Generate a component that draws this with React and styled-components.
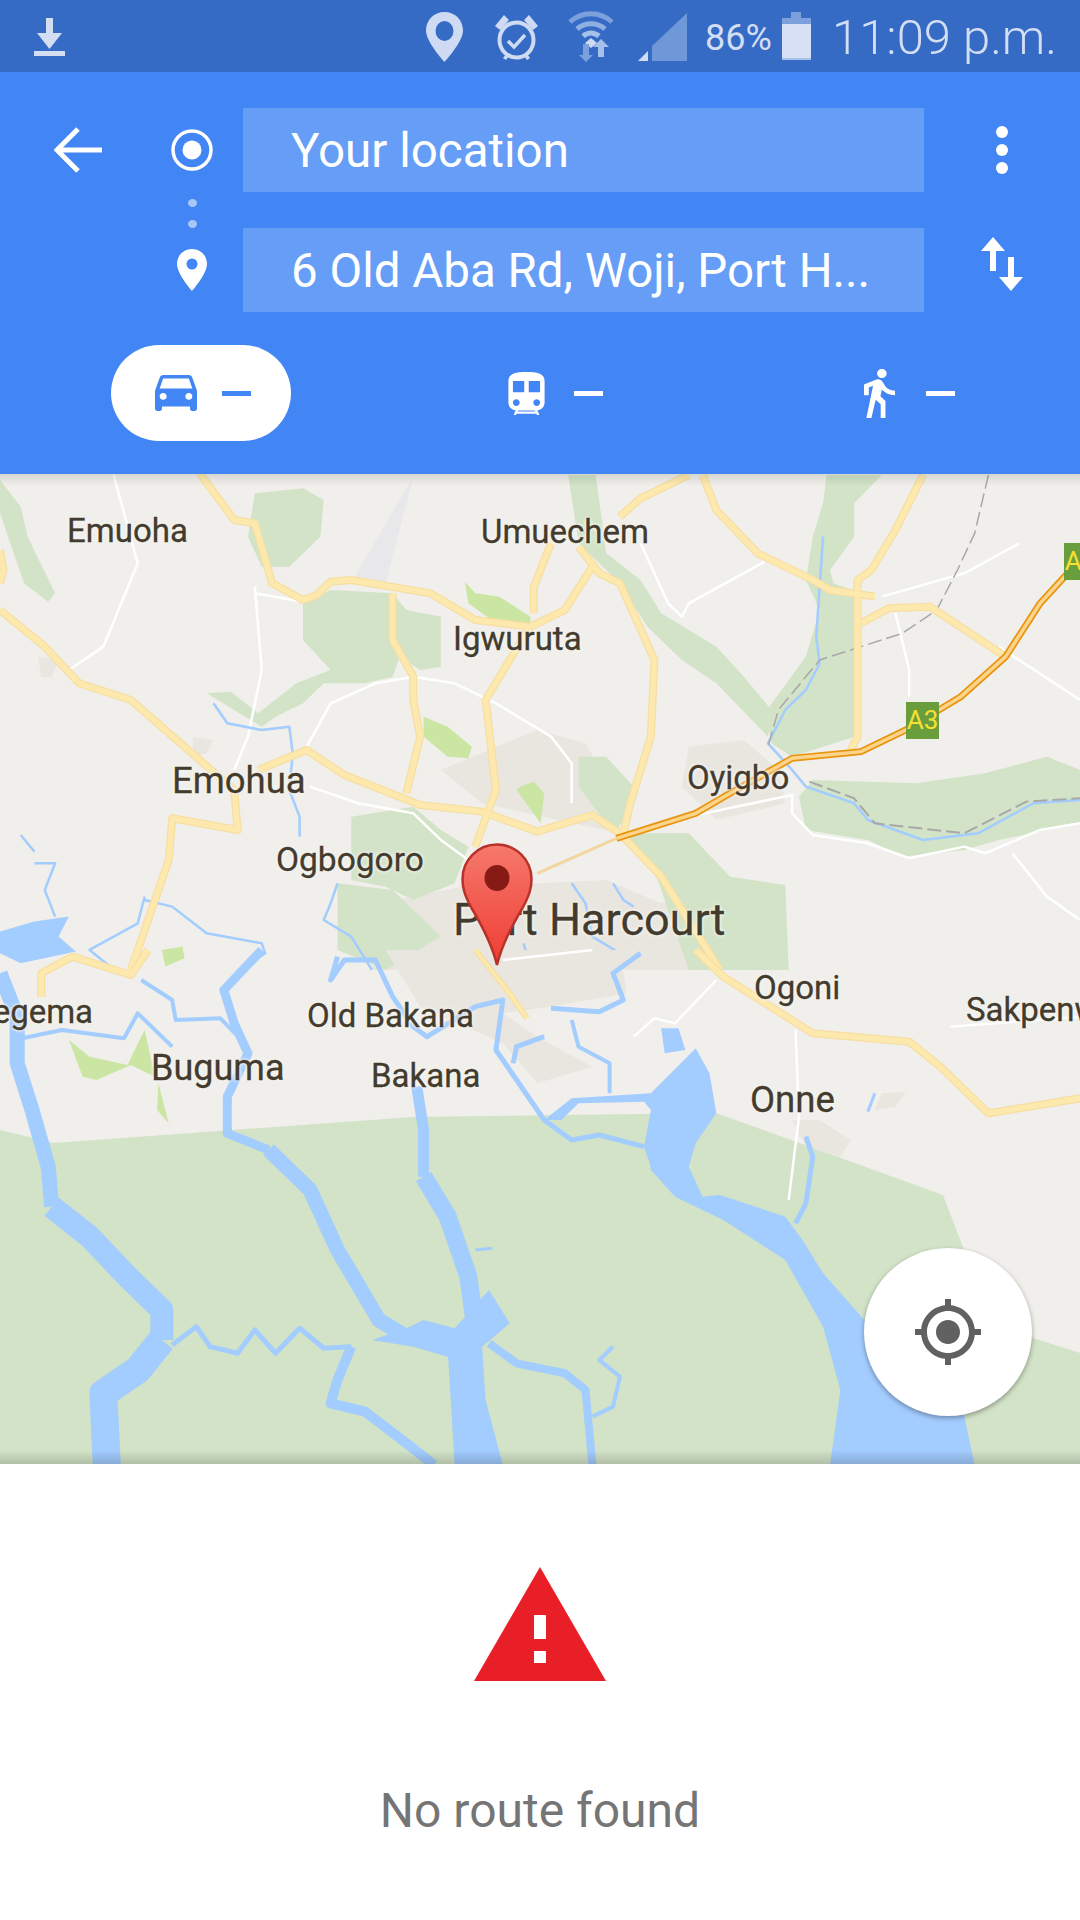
import React from "react";
import styled, { createGlobalStyle } from "styled-components";

const Global = createGlobalStyle`
  html, body { margin: 0; padding: 0; background: #fff; }
  body { font-family: Roboto, "Liberation Sans", sans-serif; }
  * { box-sizing: border-box; }
`;

const Page = styled.div`
  width: 1080px;
  height: 1920px;
  display: flex;
  flex-direction: column;
  overflow: hidden;
  background: #fff;
`;

// status bar
const StatusBar = styled.div`
  height: 72px;
  background: #366bc5;
  display: flex;
  align-items: center;
  padding-left: 34px;
  color: #d3def3;
`;
const StatusIcon = styled.svg`
  display: block;
  flex: none;
  margin-left: ${(p) => p.$ml || 0}px;
  margin-top: ${(p) => p.$mt || 0}px;
`;
const Percent = styled.span`
  font-size: 36px;
  line-height: 72px;
  padding-top: 4px;
  margin-left: 18px;
  width: 66px;
  white-space: nowrap;
`;
const Clock = styled.span`
  font-size: 49px;
  font-weight: 300;
  line-height: 72px;
  padding-top: 4px;
  margin-left: 21px;
  white-space: nowrap;
`;

// directions header
const Header = styled.header`
  height: 402px;
  background: #4285f4;
  padding-top: 36px;
`;
const RouteGrid = styled.div`
  display: grid;
  grid-template-columns: 243px 681px 156px;
  grid-template-rows: 84px 36px 84px;
`;
const LeftCell = styled.div`
  display: flex;
  align-items: center;
  padding-left: ${(p) => p.$pl || 0}px;
`;
const Field = styled.div`
  background: #669df6;
  color: #fff;
  font-size: 47.500px;
  line-height: 86px;
  height: 84px;
  padding-left: 48px;
  white-space: nowrap;
  overflow: hidden;
`;
const SideCell = styled.div`
  display: flex;
  justify-content: center;
  padding-top: ${(p) => p.$pt || 0}px;
`;
const Connector = styled.div`
  grid-column: 1;
  display: flex;
  flex-direction: column;
  align-items: center;
  gap: 13px;
  width: 243px;
  padding: 7px 0 0 141px;
`;
const ConnectorDot = styled.span`
  width: 9px;
  height: 9px;
  border-radius: 50%;
  background: #a9c8fa;
`;
const Modes = styled.div`
  display: grid;
  grid-template-columns: 353px 356px 180px;
  padding-left: 111px;
  margin-top: 33px;
`;
const Mode = styled.div`
  height: 96px;
  border-radius: 48px;
  background: ${(p) => (p.$active ? "#fff" : "transparent")};
  color: ${(p) => (p.$active ? "#4285f4" : "#fff")};
  display: flex;
  align-items: center;
  padding-left: 44px;
  width: 180px;
`;
const Dash = styled.span`
  width: 29px;
  height: 5px;
  background: currentColor;
  margin-left: ${(p) => p.$ml}px;
`;

// map
const MapArea = styled.div`
  position: relative;
  height: 990px;
  background: #f0efeb;
  overflow: hidden;
`;
const MapSvg = styled.svg`
  display: block;
`;
const Line = styled.polyline`
  fill: none;
  stroke: ${(p) => p.$c};
  stroke-width: ${(p) => p.$w};
  stroke-linejoin: ${(p) => p.$join || "round"};
  stroke-dasharray: ${(p) => p.$dash || "none"};
  vector-effect: non-scaling-stroke;
`;
const MapLabel = styled.span`
  position: absolute;
  left: ${(p) => p.$x}px;
  top: ${(p) => p.$y - 474}px;
  transform: translateY(-50%);
  font-size: ${(p) => p.$size || 33}px;
  line-height: 1;
  color: #433b2d;
  -webkit-text-stroke: 0.3px #433b2d;
  white-space: nowrap;
  text-shadow: 0 0 3px #f5f4f0, 0 0 3px #f5f4f0, 0 0 4px #f5f4f0;
`;
const Shield = styled.span`
  position: absolute;
  left: ${(p) => p.$x}px;
  top: ${(p) => p.$y - 474}px;
  width: 33px;
  height: 37px;
  background: #6a9e3c;
  color: #f6e032;
  font-size: 26px;
  line-height: 37px;
  text-align: center;
  overflow: hidden;
  white-space: nowrap;
`;
const Pin = styled.svg`
  position: absolute;
  left: 461px;
  top: 369px;
`;
const EdgeShade = styled.div`
  position: absolute;
  left: 0;
  right: 0;
  height: ${(p) => p.$h}px;
  ${(p) => (p.$top ? "top: 0;" : "bottom: 0;")}
  background: linear-gradient(
    ${(p) => (p.$top ? "to bottom" : "to top")},
    rgba(0, 0, 0, ${(p) => p.$a}),
    rgba(0, 0, 0, 0)
  );
`;
const LocateButton = styled.div`
  position: absolute;
  left: 864px;
  top: 774px;
  width: 168px;
  height: 168px;
  border-radius: 50%;
  background: #fff;
  box-shadow: 0 2px 5px rgba(0, 0, 0, 0.35);
  display: flex;
  align-items: center;
  justify-content: center;
`;

// bottom sheet
const Sheet = styled.section`
  flex: 1;
  display: flex;
  flex-direction: column;
  align-items: center;
  padding-top: 103px;
`;
const NoRoute = styled.p`
  margin: 102px 0 0;
  font-size: 48px;
  line-height: 56px;
  color: #757575;
`;

// map shapes, coordinates as read from the two zoomed crops
const greens = [
  "0,30 30,110 40,200 80,370 70,395 35,340 0,130",
  "370,70 440,55 470,90 465,200 420,290 380,290 360,200",
  "440,400 480,360 570,370 590,420 640,440 640,590 610,600 580,560 570,620 530,640 470,640 440,700 400,740 380,770 300,670 335,665 375,730 430,640 480,600 440,510",
  "825,15 865,15 880,250 930,330 960,430 1040,530 1080,620 1120,720 1115,800 1040,640 990,570 940,470 900,340 840,220",
  "1200,15 1280,15 1240,100 1240,200 1205,300 1210,340 1250,370 1240,800 1150,860 1120,820 1110,730 1170,560 1190,420 1170,330 1180,200 1195,100",
  "1160,980 1180,930 1330,940 1430,910 1520,860 1568,900 1568,1060 1450,1110 1400,1140 1310,1160 1260,1110 1170,1080",
  "510,1040 600,1010 640,1080 680,1130 660,1240 600,1290 560,1250 510,1230",
  "840,860 880,860 920,950 910,1040 890,1090 1000,1090 1060,1220 1140,1245 1145,1500 1000,1500 950,1200 900,1110 880,1060 840,950",
  "490,1240 570,1260 640,1400 560,1500 490,1440",
];
const limes = [
  "675,335 690,370 725,380 770,440 770,470 720,460 680,400",
  "615,740 650,770 685,830 680,865 650,860 615,800",
  "755,950 775,935 790,970 785,1060 750,960",
  "235,1440 265,1430 268,1465 240,1490",
];
const urban = [
  "1000,830 1080,810 1130,900 1140,1000 1040,1050 990,950",
  "640,900 780,780 850,820 900,1000 900,1090 700,1000",
  "550,1300 670,1250 780,1240 880,1230 960,1300 1050,1260 1080,1500 540,1500",
  "280,800 310,810 300,850 280,860",
  "55,560 85,570 75,620 60,620",
];
const whites = [
  "165,15 200,280 150,530 100,600",
  "370,370 440,395",
  "370,350 380,600 360,800 340,900",
  "1110,275 1000,400 990,440 970,400 930,220",
  "1280,380 1400,310 1480,220",
  "1300,430 1320,600 1320,680",
  "1450,530 1568,690",
  "440,850 480,700 545,640 600,620 660,640 720,700 800,800 830,880 830,1000",
  "450,950 520,1000 600,1030 640,1110 680,1170",
  "1000,1040 1150,975 1150,1030 1180,1095 1260,1120 1320,1165 1400,1130 1430,1150 1510,1080 1568,1060",
  "1470,1150 1520,1280 1568,1350",
];
const thinWater = [
  "310,700 330,760 380,780 420,770 425,850 420,960 435,1040 435,1100",
  "210,1280 200,1360 130,1440 160,1490",
  "210,1290 250,1310 300,1390 380,1420 385,1450 350,1500",
  "30,1095 50,1145",
  "50,1180 80,1180 65,1260 80,1340",
  "490,1240 480,1300 470,1350 510,1400 540,1500",
  "1195,200 1185,500 1190,580 1170,660 1140,720 1115,820 1150,900 1170,950 1240,1000 1260,1050 1340,1110 1420,1090 1500,1000 1568,990",
  "890,1240 905,1290 920,1310",
  "830,1240 850,1300 860,1400 900,1450",
  "760,1420 770,1490",
];
const roads = [
  "290,10 340,150 370,160 395,340 440,390 460,375 480,335 510,330 625,370 690,450 770,470",
  "570,370 570,510 600,620 600,690 610,800 590,970",
  "0,420 65,530 115,640 190,690 290,870 340,960 345,1080 250,1045 245,1170 190,1500",
  "375,900 445,840 500,915 610,1005 700,1025 780,1085 860,1035 900,1090 960,1220 1045,1500",
  "800,220 775,350 775,430",
  "860,290 820,420 770,470 740,570 705,690 720,960 690,1130",
  "840,230 870,310 900,340 950,570 945,800 915,1000 905,1090",
  "1000,15 930,85 900,140",
  "1020,15 1040,120 1100,250 1180,330 1205,360 1270,380",
  "1340,15 1300,180 1265,300 1245,330 1245,800 1235,840",
  "1250,460 1290,415 1350,410 1460,560",
  "0,240 5,300 0,340",
];
const highway = "895,1105 1010,1030 1060,970 1150,865 1250,845 1315,780 1395,680 1460,560 1510,400 1550,310";

const southWaterShapes = [
  "945,430 1010,295 1030,370 1040,490 1010,580 1000,650 945,650 935,590 945,480 935,455 840,460 815,510 790,510 830,445",
  "940,590 1000,650 1020,740 1045,735 1140,800 1165,870 1195,970 1255,1110 1400,1400 1415,1545 1205,1545 1220,1320 1195,1130 1140,930 1050,810 980,740 945,660",
  "540,1170 590,1135 615,1110 660,1135 710,1020 740,1120 700,1190 650,1220 600,1190",
  "650,1200 700,1190 705,1350 730,1545 660,1545",
  "960,235 985,235 995,300 965,310",
];
const rivers = [
  { w: 15, p: "0,70 25,200 25,340 45,470 70,650 75,770" },
  { w: 23, p: "75,770 130,860 185,980 235,1080 235,1170" },
  { w: 28, p: "235,1170 200,1260 150,1330 155,1545" },
  { w: 9, p: "380,0 325,120 340,220 360,310 330,440 330,550 390,600" },
  { w: 15, p: "390,600 450,720 490,900 550,1110 590,1160 680,1210" },
  { w: 5, p: "250,1185 285,1130 305,1190 345,1210 370,1140 400,1210 435,1135 470,1195 510,1190" },
  { w: 11, p: "605,410 615,540 615,680" },
  { w: 18, p: "615,680 650,800 680,980 690,1130" },
  { w: 10, p: "510,1190 490,1290 480,1360 530,1385 590,1480 630,1545" },
  { w: 8, p: "710,1180 750,1240 820,1270 850,1320 860,1545" },
  { w: 4, p: "890,1190 870,1230 900,1280 890,1370 860,1400" },
  { w: 3, p: "690,900 715,895" },
  { w: 5, p: "1170,560 1180,620 1170,760 1155,820" },
  { w: 4, p: "205,90 250,150 255,210 320,205 360,290" },
  { w: 4, p: "20,270 90,240 180,265 200,190 220,230 250,290" },
  { w: 5, p: "490,20 480,90 500,30 545,30 570,140 600,230 620,260 690,170 730,150 720,300 790,510 830,570 870,555 935,590" },
  { w: 5, p: "790,260 750,290 745,340" },
  { w: 5, p: "800,175 870,185 905,150 890,70 930,10" },
  { w: 4, p: "830,210 840,290 885,340 885,430" },
  { w: 3, p: "1270,430 1260,485" },
];
const z3Greens = [
  "100,270 130,320 185,345 210,240 225,380 190,345 140,390 120,380",
  "230,400 245,520 228,480",
];
const z3Urban = [
  "560,0 900,0 910,130 800,170 730,190 780,260 860,350 780,400 730,280 610,170",
  "1150,510 1190,510 1235,570 1220,620 1170,590",
  "1280,430 1315,425 1300,470 1270,480",
];
const z3Whites = [
  "1155,240 1160,500 1145,750",
  "1040,90 980,220 950,205 920,260",
  "730,30 860,0",
  "1380,230 1568,200",
];
const z3Roads = [
  { w: 8, p: "1010,0 1050,80 1180,250 1320,275 1365,350 1435,490 1568,445" },
  { w: 6, p: "690,0 740,130 765,205" },
  { w: 8, p: "60,140 60,70 105,20 190,75 215,0" },
];
const southGreen = "0,1130 54,1143 413,1117 716,1113 943,1195 964,1250 1033,1338 1080,1353 1080,1464 0,1464";

const labels = [
  ["Emuoha", 67, 530],
  ["Umuechem", 481, 531],
  ["Igwuruta", 453, 638],
  ["Emohua", 172, 781, 36.500],
  ["Oyigbo", 687, 777],
  ["Ogbogoro", 276, 860, 33.500],
  ["Port Harcourt", 453, 919, 45],
  ["Ogoni", 754, 987],
  ["Sakpenwa", 966, 1009],
  ["Degema", -29, 1011],
  ["Old Bakana", 307, 1015],
  ["Buguma", 151, 1068, 36],
  ["Bakana", 371, 1075],
  ["Onne", 750, 1100, 36.500],
];

const MapDrawing = () => (
  <MapSvg width="1080" height="990" viewBox="0 474 1080 990">
    <polygon points={southGreen} fill="#d2e3c7" />
    {/* north part of the map, crop 2 */}
    <g transform="translate(0 470) scale(0.6888 0.3333)">
      {urban.map((p) => <polygon key={p} points={p} fill="#e9e6df" />)}
      {greens.map((p) => <polygon key={p} points={p} fill="#d2e3c7" />)}
      {limes.map((p) => <polygon key={p} points={p} fill="#cbe5a3" />)}
      {whites.map((p) => <Line key={p} points={p} $c="#fff" $w={2.500} />)}
      {thinWater.map((p) => <Line key={p} points={p} $c="#a3ccff" $w={2.500} />)}
      <polygon points="0,1385 50,1355 100,1340 85,1400 110,1445 30,1480 0,1450" fill="#a3ccff" />
      <polygon points="600,20 560,340 515,320" fill="#e8e8ea" />
      <Line points="1435,15 1415,190 1390,300 1360,420 1310,490 1190,570 1130,720 1115,830" $c="#a8a8a8" $w={1.500} $dash="14 5" />
      <Line points="1175,935 1240,985 1270,1060 1400,1090 1490,995 1568,985" $c="#a8a8a8" $w={2} $dash="14 5" />
      {roads.map((p) => <Line key={p} points={p} $c="#f7dea2" $w={8} />)}
      {roads.map((p) => <Line key={p + "i"} points={p} $c="#fde9ae" $w={5.500} />)}
      <Line points="780,1210 895,1105" $c="#f1d79e" $w={3} />
      <Line points={highway} $c="#e8950f" $w={7} $join="miter" />
      <Line points={highway} $c="#fdd48b" $w={3.500} $join="miter" />
    </g>
    {/* south part of the map, crop 3 */}
    <g transform="translate(0 950) scale(0.6888 0.3333)">
      {z3Urban.map((p) => <polygon key={p} points={p} fill="#e9e6df" />)}
      {z3Greens.map((p) => <polygon key={p} points={p} fill="#cbe5a3" />)}
      {z3Whites.map((p) => <Line key={p} points={p} $c="#fff" $w={2.500} />)}
      {southWaterShapes.map((p) => <polygon key={p} points={p} fill="#a3ccff" />)}
      {rivers.map((r) => <Line key={r.p} points={r.p} $c="#a3ccff" $w={r.w} />)}
      {z3Roads.map((r) => <Line key={r.p} points={r.p} $c="#f7dea2" $w={r.w} />)}
      {z3Roads.map((r) => <Line key={r.p + "i"} points={r.p} $c="#fde9ae" $w={r.w - 2.500} />)}
    </g>
  </MapSvg>
);

const App = () => (
  <Page>
    <Global />
    <StatusBar>
      <StatusIcon width="31" height="38" viewBox="0 0 31 38" $mt="2">
        <path d="M12 0h7v15h9L15.500 31 3 15h9z" fill="#d3def3" />
        <rect y="33" width="31" height="5" fill="#d3def3" />
      </StatusIcon>
      <StatusIcon width="37" height="50" viewBox="0 0 37 50" $ml="361" $mt="2">
        <path
          fillRule="evenodd"
          fill="#cfdbf2"
          d="M18.500 0C8 0 0 8 0 18.500 0 30 18.500 50 18.500 50S37 30 37 18.500C37 8 29 0 18.500 0zm0 9a9 10 0 1 1 0 20 9 10 0 0 1 0-20z"
        />
      </StatusIcon>
      <StatusIcon width="45" height="47" viewBox="0 0 45 47" $ml="31" $mt="2">
        <ellipse cx="22.500" cy="26" rx="17" ry="17.500" fill="none" stroke="#cfdbf2" strokeWidth="4" />
        <path d="M14 27l6 6 11-12" fill="none" stroke="#cfdbf2" strokeWidth="3.500" />
        <path d="M1 12L10 1l5 5-9 10zM44 12L35 1l-5 5 9 10zM9 44l3-4 3 2-3 4zM36 44l-3-4-3 2 3 4z" fill="#cfdbf2" />
      </StatusIcon>
      <StatusIcon width="48" height="52" viewBox="0 0 48 52" $ml="28">
        <path d="M3 12C15 1 33 1 45 12" fill="none" stroke="#7ba0dc" strokeWidth="5" />
        <path d="M10 19c8-7 20-7 28 0" fill="none" stroke="#8eafe2" strokeWidth="5" />
        <path d="M16 26c5-4 11-4 16 0" fill="none" stroke="#a5c0e9" strokeWidth="5" />
        <path d="M24 28l6 5-6 5-6-5z" fill="#cfdbf2" />
        <path d="M16 34v11h4l-7 7-7-7h4V34z" fill="#7ba0dc" transform="translate(6 0)" />
        <path d="M33 36h6v11h-6zM36 29l8 8H28z" fill="#a5c0e9" transform="translate(-2 0)" />
      </StatusIcon>
      <StatusIcon width="49" height="48" viewBox="0 0 49 48" $ml="23" $mt="2">
        <path d="M14 48V33L49 0v48z" fill="#6f98d9" />
        <path d="M0 48l10-10v10z" fill="#cfdbf2" />
      </StatusIcon>
      <Percent>86%</Percent>
      <StatusIcon width="29" height="48" viewBox="0 0 29 48" $ml="11">
        <path d="M9 0h10v6H9zM0 6h29v6H0z" fill="#7ba0dc" />
        <rect y="12" width="29" height="34" fill="#d7e0f4" />
        <rect y="46" width="29" height="2" fill="#a5c0e9" />
      </StatusIcon>
      <Clock>11:09 p.m.</Clock>
    </StatusBar>

    <Header>
      <RouteGrid>
        <LeftCell $pl="54">
          <svg width="48" height="46" viewBox="0 0 48 46">
            <path d="M24 2L3 23l21 21M3 23h45" fill="none" stroke="#fff" strokeWidth="5" />
          </svg>
          <svg width="42" height="42" viewBox="0 0 42 42" style={{ marginLeft: 69 }}>
            <circle cx="21" cy="21" r="19" fill="none" stroke="#fff" strokeWidth="3.500" />
            <circle cx="21" cy="21" r="9.500" fill="#fff" />
          </svg>
        </LeftCell>
        <Field>Your location</Field>
        <SideCell $pt="18">
          <svg width="12" height="48" viewBox="0 0 12 48">
            <circle cx="6" cy="6" r="6" fill="#fff" />
            <circle cx="6" cy="24" r="6" fill="#fff" />
            <circle cx="6" cy="42" r="6" fill="#fff" />
          </svg>
        </SideCell>
        <Connector>
          <ConnectorDot />
          <ConnectorDot />
        </Connector>
        <div />
        <div />
        <LeftCell $pl="177">
          <svg width="30" height="42" viewBox="0 0 30 42">
            <path
              fillRule="evenodd"
              fill="#fff"
              d="M15 0C6.500 0 0 6.500 0 15c0 10 15 27 15 27s15-17 15-27C30 6.500 23.500 0 15 0zm0 9.500a5.500 5.500 0 1 1 0 11 5.500 5.500 0 0 1 0-11z"
            />
          </svg>
        </LeftCell>
        <Field>6 Old Aba Rd, Woji, Port H...</Field>
        <SideCell $pt="9">
          <svg width="42" height="54" viewBox="0 0 42 54">
            <path d="M12 0l12 14h-9v20H9V14H0zM27 20h6v20h9L30 54 18 40h9z" fill="#fff" />
          </svg>
        </SideCell>
      </RouteGrid>
      <Modes>
        <Mode $active>
          <svg width="42" height="36" viewBox="3 5 18 16" preserveAspectRatio="none">
            <path
              fill="#4285f4"
              d="M18.920 6.010C18.720 5.420 18.160 5 17.500 5h-11c-.66 0-1.210.42-1.420 1.010L3 12v8c0 .55.45 1 1 1h1c.55 0 1-.45 1-1v-1h12v1c0 .55.45 1 1 1h1c.55 0 1-.45 1-1v-8l-2.080-5.990zM6.500 16c-.83 0-1.500-.67-1.500-1.500S5.670 13 6.500 13s1.500.67 1.500 1.500S7.330 16 6.500 16zm11 0c-.83 0-1.500-.67-1.500-1.500s.67-1.500 1.500-1.500 1.500.67 1.500 1.500-.67 1.500-1.500 1.500zM5 11l1.500-4.500h11L19 11H5z"
            />
          </svg>
          <Dash $ml="25" />
        </Mode>
        <Mode>
          <svg width="37" height="43" viewBox="4 2 16 19">
            <path
              fill="#fff"
              d="M12 2c-4.420 0-8 .5-8 4v9.500C4 17.430 5.570 19 7.500 19h9c1.930 0 3.500-1.570 3.500-3.500V6c0-3.500-3.580-4-8-4zM7.500 17c-.83 0-1.500-.67-1.500-1.500S6.670 14 7.500 14s1.500.67 1.500 1.500S8.330 17 7.500 17zm3.500-6H6V6h5v5zm5.500 6c-.83 0-1.500-.67-1.500-1.500s.67-1.500 1.500-1.500 1.500.67 1.500 1.500-.67 1.500-1.500 1.500zm1.500-6h-5V6h5v5z"
            />
            <path d="M8 18.500L6.800 21M16 18.500l1.200 2.500M7.500 20h9" fill="none" stroke="#fff" strokeWidth="1" />
          </svg>
          <Dash $ml="29" />
        </Mode>
        <Mode>
          <svg width="31" height="49" viewBox="6 1.500 13 21.500" preserveAspectRatio="none">
            <path
              fill="#fff"
              d="M13.500 5.500c1.100 0 2-.9 2-2s-.9-2-2-2-2 .9-2 2 .9 2 2 2zM9.800 8.900L7 23h2.100l1.800-8 2.100 2v6h2v-7.500l-2.100-2 .6-3C14.800 12 16.800 13 19 13v-2c-1.900 0-3.500-1-4.300-2.400l-1-1.600c-.4-.6-1-1-1.700-1-.3 0-.5.1-.8.1L6 8.300V13h2V9.600l1.800-.7"
            />
          </svg>
          <Dash $ml="31" />
        </Mode>
      </Modes>
    </Header>

    <MapArea>
      <MapDrawing />
      <EdgeShade $top $h={12} $a={0.1} />
      <EdgeShade $h={14} $a={0.16} />
      {labels.map(([text, x, y, size]) => (
        <MapLabel key={text} $x={x} $y={y} $size={size}>{text}</MapLabel>
      ))}
      <Shield $x={906} $y={702}>A3</Shield>
      <Shield $x={1064} $y={543}>A3</Shield>
      <Pin width="72" height="124" viewBox="0 0 72 124">
        <defs>
          <linearGradient id="pinFill" x1="0" y1="0" x2="0" y2="1">
            <stop offset="0" stopColor="#f6786c" />
            <stop offset="1" stopColor="#ee3d33" />
          </linearGradient>
        </defs>
        <path
          d="M36 1.500C17 1.500 1.500 17 1.500 36c0 9 2 16 9 29 9 15 20 34 25.500 57 5.500-23 16.500-42 25.500-57 7-13 9-20 9-29C70.500 17 55 1.500 36 1.500z"
          fill="url(#pinFill)"
          stroke="#b8322a"
          strokeWidth="2.500"
        />
        <ellipse cx="36" cy="35" rx="12.500" ry="13" fill="#861a14" />
      </Pin>
      <LocateButton>
        <svg width="72" height="72" viewBox="0 0 24 24">
          <path
            fill="#616161"
            d="M12 8c-2.210 0-4 1.790-4 4s1.790 4 4 4 4-1.790 4-4-1.790-4-4-4zm8.940 3c-.46-4.170-3.770-7.480-7.940-7.940V1h-2v2.060C6.830 3.520 3.520 6.830 3.060 11H1v2h2.060c.46 4.170 3.770 7.480 7.940 7.940V23h2v-2.060c4.170-.46 7.480-3.770 7.940-7.940H23v-2h-2.060zM12 19c-3.870 0-7-3.130-7-7s3.130-7 7-7 7 3.130 7 7-3.130 7-7 7z"
          />
        </svg>
      </LocateButton>
    </MapArea>

    <Sheet>
      <svg width="132" height="114" viewBox="0 0 132 114">
        <path d="M66 0l66 114H0z" fill="#e81f27" />
        <path d="M60 48h12v24H60zM60 84h12v12H60z" fill="#fff" />
      </svg>
      <NoRoute>No route found</NoRoute>
    </Sheet>
  </Page>
);

export default App;
